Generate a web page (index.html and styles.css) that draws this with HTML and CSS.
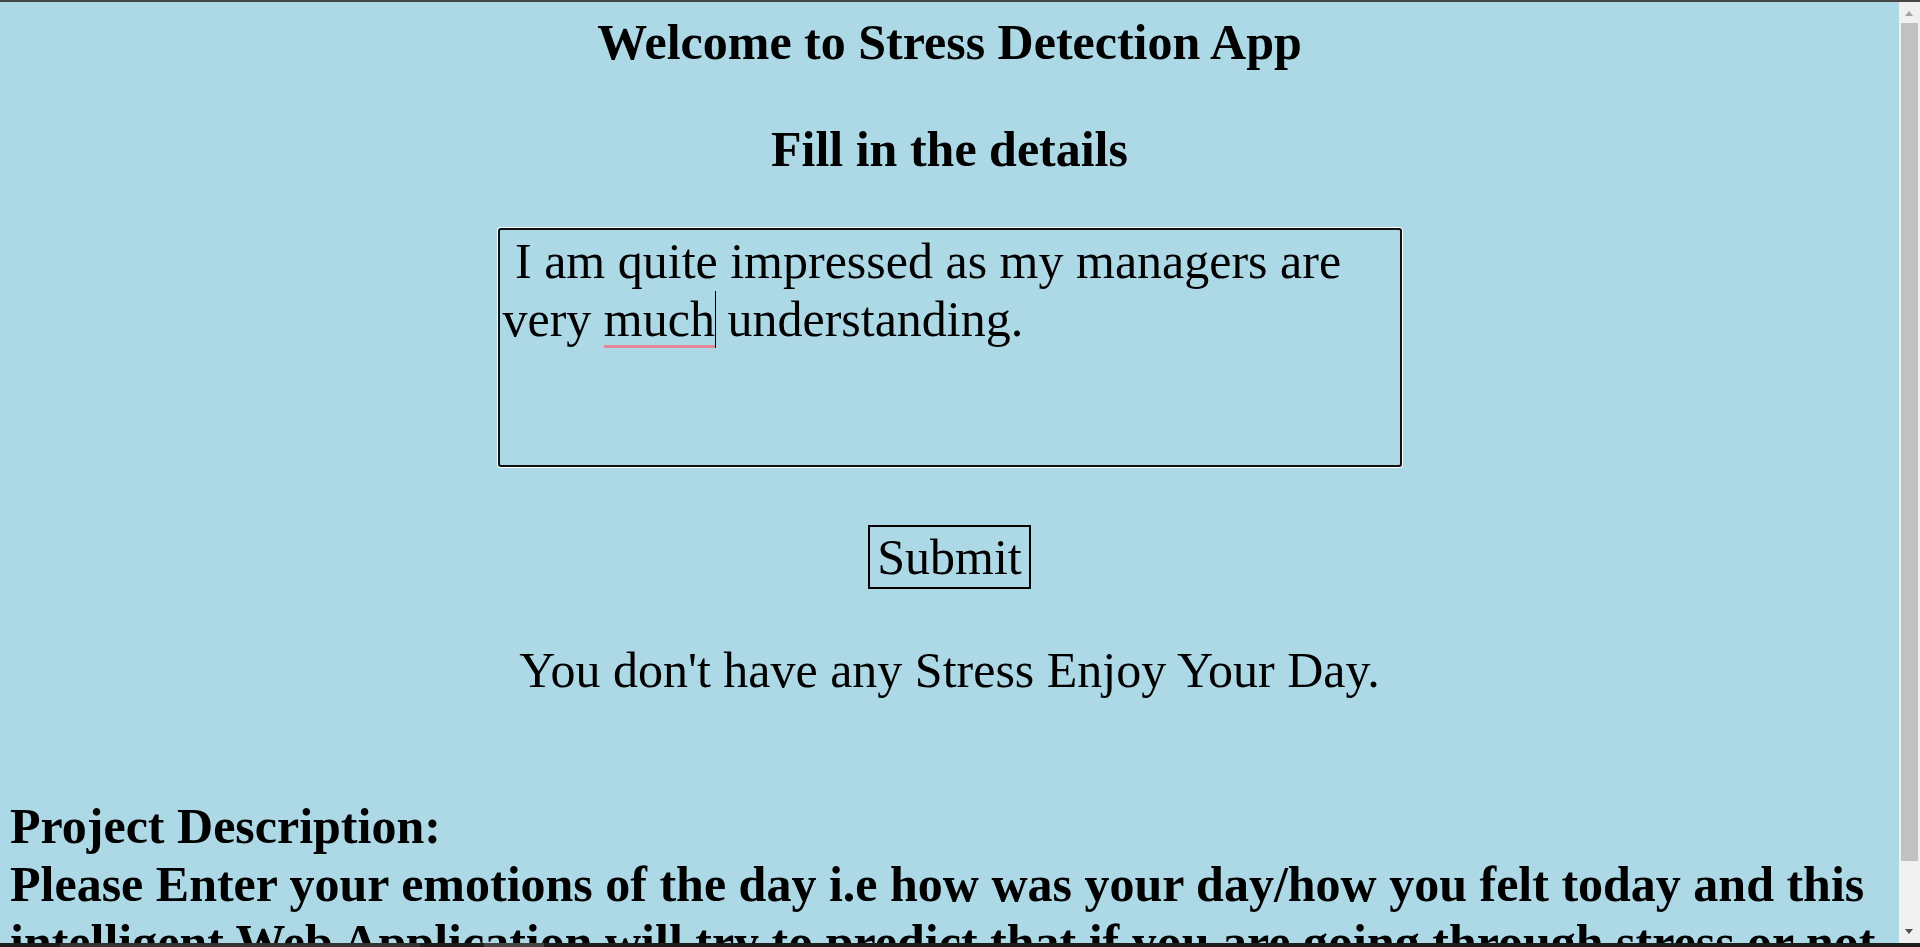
FILE: index.html
```html
<!DOCTYPE html>
<html lang="en">
<head>
<meta charset="utf-8">
<title>Stress Detection App</title>
<link rel="stylesheet" href="styles.css">
</head>
<body>
<div class="window-top"></div>
<main class="page">
  <h1 class="title">Welcome to Stress Detection App</h1>
  <h2 class="subtitle">Fill in the details</h2>
  <form class="form">
    <div class="textbox" role="textbox" aria-multiline="true"> I am quite impressed as my managers are very <span class="misspelled">much</span><span class="caret"></span> understanding.</div>
    <button class="submit" type="button">Submit</button>
  </form>
  <p class="result">You don't have any Stress Enjoy Your Day.</p>
  <section class="desc">
    <div>Project Description:</div>
    <div>Please Enter your emotions of the day i.e how was your day/how you felt today and this intelligent Web Application will try to predict that if you are going through stress or not</div>
  </section>
</main>
<div class="scrollbar">
  <div class="sb-up"></div>
  <div class="sb-thumb"></div>
  <div class="sb-down"></div>
</div>
<div class="taskbar">
  <div class="tb-seg tb-a"></div>
  <div class="tb-seg tb-b"></div>
</div>
</body>
</html>
```

FILE: styles.css
```css
html {
  overflow: hidden;
}
body {
  margin: 0;
  background: #add8e6;
  color: #000;
  font-family: "Liberation Serif", "Times New Roman", serif;
  font-size: 50px;
  line-height: normal;
}
.page {
  padding: 0 31px 0 10px;
}
.title {
  margin: 13px 0 0;
  font-size: 50px;
  text-align: center;
}
.subtitle {
  margin: 49px 0 0;
  font-size: 50px;
  text-align: center;
}
.form {
  display: flex;
  flex-direction: column;
  align-items: center;
  margin: 0;
}
.textbox {
  margin-top: 50px;
  width: 904px;
  height: 239px;
  box-sizing: border-box;
  border: 2px solid #111;
  border-radius: 3px;
  box-shadow: 0 0 0 1px #fff;
  padding: 2px 3px;
  line-height: 58px;
  white-space: pre-wrap;
  text-align: left;
}
.misspelled {
  text-decoration: underline;
  text-decoration-color: #e08a99;
  text-decoration-thickness: 3px;
  text-underline-offset: 9px;
  text-decoration-skip-ink: none;
}
.caret {
  display: inline-block;
  width: 1px;
  height: 57px;
  margin-right: -1px;
  background: #000;
  vertical-align: -12px;
}
.submit {
  margin-top: 58px;
  font: inherit;
  line-height: normal;
  color: #000;
  background: transparent;
  border: 2px solid #000;
  border-radius: 0;
  padding: 1px 7px;
}
.result {
  margin: 52px 0 0;
  text-align: center;
}
.desc {
  margin-top: 98px;
  font-weight: bold;
}
.window-top {
  position: fixed;
  top: 0;
  left: 0;
  right: 0;
  height: 2px;
  background: #454545;
  z-index: 5;
}
.scrollbar {
  position: fixed;
  top: 2px;
  right: 0;
  bottom: 4px;
  width: 21px;
  background: #f0f0f0;
  z-index: 4;
}
.sb-up {
  position: absolute;
  top: 9px;
  left: 6px;
  width: 0;
  height: 0;
  border-left: 4px solid transparent;
  border-right: 4px solid transparent;
  border-bottom: 5px solid #a3a3a3;
}
.sb-thumb {
  position: absolute;
  top: 21px;
  left: 2px;
  width: 17px;
  height: 838px;
  background: #c1c1c1;
}
.sb-down {
  position: absolute;
  bottom: 9px;
  left: 6px;
  width: 0;
  height: 0;
  border-left: 4px solid transparent;
  border-right: 4px solid transparent;
  border-top: 5px solid #505050;
}
.taskbar {
  position: fixed;
  left: 0;
  right: 0;
  bottom: 0;
  height: 4px;
  background: #1e1e1e;
  z-index: 6;
}
.tb-seg {
  position: absolute;
  top: 0;
  height: 4px;
}
.tb-a {
  left: 60px;
  width: 360px;
  background: #333;
}
.tb-b {
  left: 484px;
  width: 60px;
  background: #454545;
}
```
